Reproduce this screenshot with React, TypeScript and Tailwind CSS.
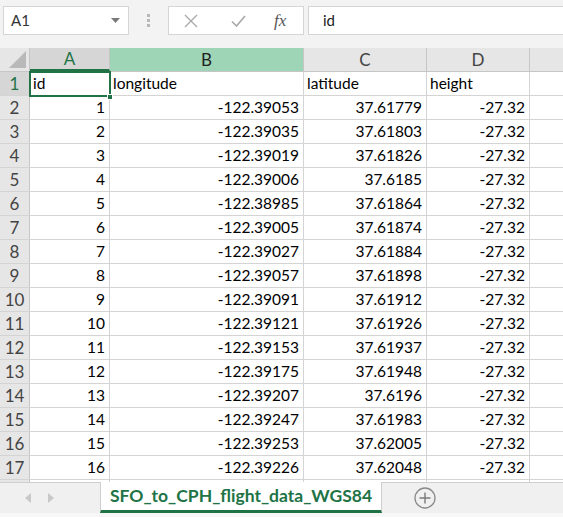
import React from 'react';

const rows = [
  ['1', '-122.39053', '37.61779'],
  ['2', '-122.39035', '37.61803'],
  ['3', '-122.39019', '37.61826'],
  ['4', '-122.39006', '37.6185'],
  ['5', '-122.38985', '37.61864'],
  ['6', '-122.39005', '37.61874'],
  ['7', '-122.39027', '37.61884'],
  ['8', '-122.39057', '37.61898'],
  ['9', '-122.39091', '37.61912'],
  ['10', '-122.39121', '37.61926'],
  ['11', '-122.39153', '37.61937'],
  ['12', '-122.39175', '37.61948'],
  ['13', '-122.39207', '37.6196'],
  ['14', '-122.39247', '37.61983'],
  ['15', '-122.39253', '37.62005'],
  ['16', '-122.39226', '37.62048'],
];

const cell = 'h-full border-r border-[#d4d4d4] flex items-center shrink-0';
const hdr = 'h-full border-r border-[#c6c6c6] flex items-center justify-center shrink-0';

function Toolbar() {
  return (
    <div className="h-[41px] flex items-center pl-[3px] bg-[#f3f3f3] shrink-0">
      <div className="w-[126px] h-[29px] bg-white border border-[#d5d5d5] flex items-center justify-between pl-[7px] pr-[8px]">
        <span className="text-[15px] text-[#333]">A1</span>
        <svg width="9" height="5" viewBox="0 0 9 5">
          <path d="M0 0h9L4.5 5z" fill="#7a7a7a" />
        </svg>
      </div>
      <div className="w-[39px] flex flex-col items-center gap-[2px]">
        <span className="w-[3px] h-[3px] bg-[#b8b8b8]" />
        <span className="w-[3px] h-[3px] bg-[#b8b8b8]" />
        <span className="w-[3px] h-[3px] bg-[#b8b8b8]" />
      </div>
      <div className="w-[136px] h-[29px] bg-white border border-[#d5d5d5] flex items-center">
        <svg className="ml-[15px]" width="14" height="14" viewBox="0 0 14 14">
          <path d="M1 1l12 12M13 1L1 13" stroke="#a8a8a8" strokeWidth="1.3" />
        </svg>
        <svg className="ml-[33px]" width="15" height="12" viewBox="0 0 15 12">
          <path d="M1 6.5l4.5 4.5L14 1" stroke="#a8a8a8" strokeWidth="1.6" fill="none" />
        </svg>
        <span className="ml-[28px] text-[17px] italic text-[#555] font-['Liberation_Serif',serif]">fx</span>
      </div>
      <div className="ml-[4px] flex-1 h-[29px] bg-white border border-[#d5d5d5] border-r-0 flex items-center pl-[14px]">
        <span className="text-[15px] text-[#222]">id</span>
      </div>
    </div>
  );
}

function HeaderRow() {
  return (
    <div className="h-[24px] flex border-b border-[#c6c6c6] bg-[#e6e6e6] text-[17px] text-[#444]">
      <div className={`${hdr} w-[30px] relative`}>
        <svg className="absolute right-[3px] bottom-[3px]" width="17" height="17" viewBox="0 0 17 17">
          <path d="M17 0v17H0z" fill="#b9b9b9" />
        </svg>
      </div>
      <div className={`${hdr} w-[80px] bg-[#d6d6d6] text-[#217346] border-b-2 border-b-[#217346]`}>A</div>
      <div className={`${hdr} w-[194px] bg-[#9fd5b7] text-[#222]`}>B</div>
      <div className={`${hdr} w-[123px]`}>C</div>
      <div className={`${hdr} w-[103px]`}>D</div>
      <div className="flex-1" />
    </div>
  );
}

function Row({ n, a, b, c, d, first }: { n: number; a: string; b: string; c: string; d: string; first?: boolean }) {
  const align = first ? 'justify-start pl-[3px]' : 'justify-end pr-[4px]';
  return (
    <div className="h-[24px] flex border-b border-[#d4d4d4] bg-white text-[15.5px] text-black">
      <div
        className={`h-full w-[30px] shrink-0 flex items-center justify-center border-r border-[#c6c6c6] text-[17px] ${
          first ? 'bg-[#d6d6d6] text-[#217346]' : 'bg-[#e6e6e6] text-[#444]'
        }`}
      >
        {n}
      </div>
      <div className={`${cell} w-[80px] ${align}`}>{a}</div>
      <div className={`${cell} w-[194px] ${align}`}>{b}</div>
      <div className={`${cell} w-[123px] ${align}`}>{c}</div>
      <div className={`${cell} w-[103px] ${align}`}>{d}</div>
      <div className="flex-1" />
    </div>
  );
}

function SheetTabs() {
  return (
    <div className="h-[35px] shrink-0 flex flex-col bg-[#f0f0f0]">
      <div className="h-[31px] flex border-t border-[#cfcfcf]">
        <div className="w-[100px] flex items-center pl-[25px] gap-[17px]">
          <svg width="6" height="10" viewBox="0 0 6 10">
            <path d="M6 0v10L0 5z" fill="#c8c8c8" />
          </svg>
          <svg width="6" height="10" viewBox="0 0 6 10">
            <path d="M0 0v10l6-5z" fill="#c8c8c8" />
          </svg>
        </div>
        <div className="w-[282px] -mt-px bg-white border-x border-[#cfcfcf] border-b-[3px] border-b-[#217346] flex items-center justify-center">
          <span className="text-[17.5px] font-bold text-[#217346]">SFO_to_CPH_flight_data_WGS84</span>
        </div>
        <div className="w-[86px] flex items-center justify-center">
          <svg width="22" height="22" viewBox="0 0 22 22">
            <circle cx="11" cy="11" r="10" fill="none" stroke="#8a8a8a" strokeWidth="1.3" />
            <path d="M11 5.5v11M5.5 11h11" stroke="#7a7a7a" strokeWidth="1.4" />
          </svg>
        </div>
      </div>
      <div className="flex-1 bg-[#f7f7f7]" />
    </div>
  );
}

export default function App() {
  return (
    <div className="w-[563px] h-[517px] flex flex-col overflow-hidden bg-[#f3f3f3] font-['Lato','Open_Sans',sans-serif]">
      <Toolbar />
      <div className="h-[7px] shrink-0 bg-[#f3f3f3]" />
      <div className="flex-1 overflow-hidden relative bg-white">
        <HeaderRow />
        <Row n={1} a="id" b="longitude" c="latitude" d="height" first />
        {rows.map((r, i) => (
          <Row key={r[0]} n={i + 2} a={r[0]} b={r[1]} c={r[2]} d="-27.32" />
        ))}
        <div className="h-[8px] flex">
          <div className="w-[30px] h-full bg-[#e6e6e6] border-r border-[#c6c6c6]" />
          <div className="w-[80px] h-full border-r border-[#d4d4d4]" />
          <div className="w-[194px] h-full border-r border-[#d4d4d4]" />
          <div className="w-[123px] h-full border-r border-[#d4d4d4]" />
          <div className="w-[103px] h-full border-r border-[#d4d4d4]" />
        </div>
        <div className="absolute left-[29px] top-[23px] w-[82px] h-[26px] border-2 border-[#217346] pointer-events-none" />
        <div className="absolute left-[107px] top-[46px] w-[6px] h-[6px] bg-[#217346] border border-white" />
      </div>
      <SheetTabs />
    </div>
  );
}
